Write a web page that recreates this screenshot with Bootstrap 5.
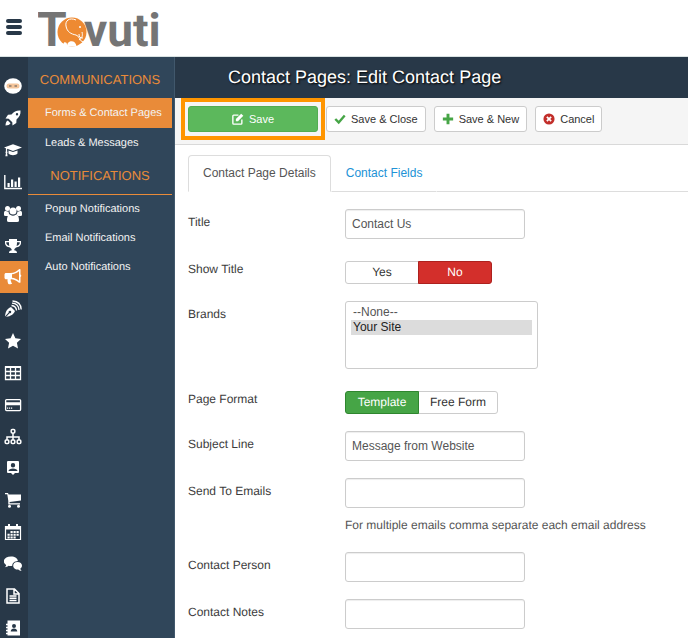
<!DOCTYPE html>
<html lang="en">
<head>
<meta charset="utf-8">
<meta name="viewport" content="width=device-width, initial-scale=1">
<title>Contact Pages: Edit Contact Page</title>
<link rel="stylesheet" href="https://cdn.jsdelivr.net/npm/bootstrap@5.3.0/dist/css/bootstrap.min.css">
<style>
:root{--rail:#283848;--side:#30465a;--accent:#e98b39}
body{font-family:"Liberation Sans",Arial,sans-serif;font-size:12px;line-height:20px;color:#3c3c3c;background:#fff;text-rendering:geometricPrecision}
.topbar{height:57px;border-bottom:1px solid #d9e2e2;padding-left:6px}
.menu-btn{line-height:0}
.scroll-pane{overflow-y:auto;scrollbar-width:none}
.scroll-pane::-webkit-scrollbar{display:none}
.rail{width:28px;background:var(--rail);padding-top:13px}
.rail a{display:flex;align-items:center;justify-content:center;height:32px;padding-right:2px;color:#fff}
.rail li:nth-child(6n) a{height:31px}
.rail a.active{background:var(--accent)}
.rail svg{width:18px;height:18px}
.sidemenu{width:147px;background:var(--side);border-right:1px solid #41586c;padding:0 2px 0 0}
.side-title{font-size:13px;line-height:20px;color:var(--accent);text-align:center;padding:13px 0 8px}
.side-title.ruled{padding:8px 0;border-bottom:1px solid var(--accent)}
.sidemenu a{display:block;font-size:11px;line-height:29px;padding-left:17px;color:#f3f3f3;text-decoration:none;white-space:nowrap}
.sidemenu a.active{background:var(--accent);padding-top:1px;margin-bottom:1px}
.page-title{background:var(--rail);color:#fff;font-size:18px;line-height:41px;padding-left:53px;text-shadow:1px 1px 2px #000}
.toolbar{background:#f5f5f5;border-bottom:1px solid #d9d9d9;padding:8px 13px 12px}
.tool{display:inline-flex;align-items:center;justify-content:center;height:26px;padding:0 7px;border:1px solid #ccc;border-radius:3px;background:#fff;font-size:11px;line-height:16px;color:#333;gap:5px;white-space:nowrap}
.tool svg{width:12px;height:12px}
.tool-save{background:#5cb85c;border-color:#52ad52;color:#fff;width:130px;position:relative}
.tool-save::after{content:"";position:absolute;inset:-9px -8px;border:4px solid #ff9500;z-index:1;pointer-events:none}
.edit-tabs{padding:10px 0 0 13px;border:0}
.edit-tabs .nav-link{border:1px solid transparent;border-bottom-color:#ddd;border-radius:4px 4px 0 0;margin:0;padding:7px 14px 8px;color:#2192d6;line-height:20px}
.edit-tabs .nav-link.active{border-color:#ddd #ddd #fff;color:#555}
.edit-tabs .tab-rest{border-bottom:1px solid #ddd}
.edit-form{padding:17px 13px 0}
.field{display:flex;margin-bottom:17px}
.field-name{width:157px;flex:none;padding-top:3px}
.text-field{width:180px;height:30px;padding:4px 6px;border:1px solid #ccc;border-radius:3px;font-size:12px;color:#555;box-shadow:inset 0 1px 1px #eee}
.list-field{display:block;width:193px;height:68px;padding:3px 5px;border:1px solid #ccc;border-radius:3px;font-size:12px;line-height:15px;color:#555;overflow:hidden}
.list-field option{line-height:15px;padding:0 2px;min-height:15px}
.list-field option:checked{background:#dcdcdc linear-gradient(#dcdcdc,#dcdcdc);color:#222}
.switch{padding-top:5px}
.switch .btn{height:23px;min-width:74px;padding:0 11px;border:1px solid #ccc;border-radius:3px;font-size:12px;line-height:21px;color:#333;background:#fff}
.switch .btn-check:checked+.pick-no{background:#d32f2b;border-color:#ad211e;color:#fff}
.switch .btn-check:checked+.pick-yes{background:#46a546;border-color:#2f862f;color:#fff}
.hint{padding-top:7px;color:#555}
</style>
<script src="https://cdn.jsdelivr.net/npm/bootstrap@5.3.0/dist/js/bootstrap.bundle.min.js"></script>
</head>
<body class="vh-100 d-flex flex-column overflow-hidden">
<header class="topbar d-flex align-items-center flex-shrink-0">
  <button class="menu-btn btn p-0 border-0" type="button" aria-label="Menu">
    <svg width="16" height="18" viewBox="0 0 16 18"><g fill="#283848"><rect width="16" height="4" rx="2"/><rect y="6" width="16" height="4" rx="2"/><rect y="12" width="16" height="4" rx="2"/></g></svg>
  </button>
  <a href="#" class="ms-3 lh-1" aria-label="Tovuti">
    <svg width="126" height="60" viewBox="0 -2 126 60">
      <g fill="#757575" font-family="Roboto, sans-serif" font-weight="700"><text x="-1" y="46" font-size="48">T</text><text x="46" y="46" font-size="46">vuti</text></g>
      <g transform="translate(0 7)">
      <circle cx="34" cy="25" r="14.500" fill="#ee8a32"/>
      <path d="M29 40v-2.500c0-2-1.800-2.800-3-2l-1 2.500 2 2zM29 39.500c0-7 9-7 9.500 0z" fill="#fff"/>
      <path d="M38 13c-7-3-11 1-10 6 1 6 5 8 10 9 4 1 3 6 7 7M44 25c1 4 0 6-3 8M41 27c0 3 1 4 4 4" fill="none" stroke="#fff" stroke-width="1"/>
      <circle cx="42" cy="20" r="1" fill="#fff"/>
      </g>
    </svg>
  </a>
</header>

<div class="d-flex flex-grow-1 overflow-hidden">
  <nav class="rail scroll-pane flex-shrink-0" aria-label="Sections">
    <ul class="list-unstyled mb-0">
      <li><a href="#" aria-label="Ninja"><svg viewBox="0 0 18 18"><ellipse cx="9" cy="9" rx="8.800" ry="7.800" fill="#fff"/><rect x="2.500" y="6.500" width="13" height="5" rx="2.500" fill="#f4c59b"/><path d="M5 9h2.500M10.500 9H13" stroke="#555" stroke-width="1.200"/></svg></a></li>
      <li><a href="#" aria-label="Launch"><svg viewBox="0 0 18 18" fill="currentColor"><path fill-rule="evenodd" d="M16.500 1.500c-4-.3-6.500 1-9 4L4 5.700 1.500 9.500l3.200.2 3.600 3.600.2 3.200 3.800-2.500.2-3.500c3-2.500 4.300-5 4-9zM13 4a1.200 1.200 0 1 1 0 2.400A1.200 1.200 0 0 1 13 4zM3.800 11.500C2 12.500 1.700 14 1.500 16.500c2.500-.2 4-.5 5-2.300z"/></svg></a></li>
      <li><a href="#" aria-label="Courses"><svg viewBox="0 0 20 18"><path fill="#fff" d="M10 2.500 20 6.200 10 10 3.500 7.600v3.200c.8.500.5 1.300 0 1.700l.5 3.500H1.500l.6-3.500c-.5-.5-.7-1.200 0-1.700V7L0 6.200zM5 9.500l5 1.800 5-1.800v3.500c-2 2.300-8 2.300-10 0z"/></svg></a></li>
      <li><a href="#" aria-label="Reports"><svg viewBox="0 0 18 18"><path d="M.8 2v13.500H18" fill="none" stroke="#fff" stroke-width="1.400"/><path d="M3.500 10h2.200v4H3.500zM7 6.500h2.200V14H7zM10.500 8.500h2.200V14h-2.200zM14 4.500h2.200V14H14z" fill="#fff"/></svg></a></li>
      <li><a href="#" aria-label="Users"><svg viewBox="0 0 18 18" fill="currentColor"><circle cx="3.500" cy="3.500" r="2.500"/><circle cx="14.500" cy="3.500" r="2.500"/><circle cx="9" cy="6" r="3.500"/><path d="M0 10V8c0-2 1.500-2.500 3-1.500h1.500C4.700 8 5 9 5.800 9.500L4 11H1.500Q0 11 0 10zM18 10V8c0-2-1.500-2.500-3-1.500h-1.500c-.2 1.500-.5 2.500-1.300 3L14 11h2.500q1.500 0 1.500-1zM3 15.500C3 12 4 9.500 6.300 9.800c1.700 1.300 3.700 1.300 5.400 0C14 9.500 15 12 15 15.500q0 1.500-2 1.500H5q-2 0-2-1.500z"/></svg></a></li>
      <li><a href="#" aria-label="Achievements"><svg viewBox="0 0 18 18"><path fill="#fff" fill-rule="evenodd" d="M5 2h8v2h4v2c0 2.800-2.500 4.300-5 4.500-1 1-1.800 1.500-1.800 2.700 1.500 0 2.800.8 2.800 2.800H5c0-2 1.300-2.800 2.800-2.800 0-1.200-.8-1.700-1.800-2.700C3.500 10.300 1 8.800 1 6V4h4zM2.300 5.300V6c0 1.400 1.300 2.500 3 3C4.900 7.800 5 6.500 5 5.300zm13.400 0H13c0 1.200 0 2.500-.4 3.700 1.700-.5 3.100-1.600 3.100-3z"/></svg></a></li>
      <li><a href="#" class="active" aria-label="Communications"><svg viewBox="0 0 18 18"><path fill="#fff" fill-rule="evenodd" d="M16.500 1.500v5c1 .5 1 2 0 2.500v5c0 1-1 1-1.500.7C12.300 12.500 10 11.300 7 11.200c-.7.700-.3 1.500.2 2-.4.800 0 1.300 1 2-.8 1.300-3 1.400-4 .6-.4-1.500-1-3-.6-4.600H2c-.8 0-1.500-.6-1.500-1.500V6.500C.5 5.600 1.200 5 2 5h4.500c3.500 0 6-1.700 8.500-3.800.7-.5 1.500-.4 1.500.3zM15 3.200C12.700 5 10.500 6 8 6.300v3.500c2.500.3 4.700 1.200 7 3z"/></svg></a></li>
      <li><a href="#" aria-label="Blog"><svg viewBox="0 0 18 18"><path fill="#fff" fill-rule="evenodd" d="M1 16.500C1.500 12 2.500 9 7 7l4 4c-1.500 3.500-4 5-9 6l3.500-3.800a1.300 1.300 0 1 0-.8-.8z"/><path d="M7.500 5.500c3 .3 4.800 2 5 5M8 3.200c4.500.2 6.700 2.700 7 6.800M8.500 1c5.500.3 8.500 3.500 8.700 8.500" fill="none" stroke="#fff" stroke-width="1.300"/></svg></a></li>
      <li><a href="#" aria-label="Favorites"><svg viewBox="0 0 18 18"><path fill="#fff" d="m9 1 2.400 5.200 5.600.7-4.100 3.900 1.100 5.700L9 13.700l-5 2.800 1.100-5.700L1 6.900l5.600-.7z"/></svg></a></li>
      <li><a href="#" aria-label="Tables"><svg viewBox="0 0 18 18"><path fill="none" stroke="#fff" stroke-width="1.300" d="M1.500 3h15v12.500h-15zM1.500 7.500h15M1.500 11.500h15M6.500 3v12.500M11.500 3v12.500"/><path fill="#fff" d="M1 2h16v2H1z"/></svg></a></li>
      <li><a href="#" aria-label="Payments"><svg viewBox="0 0 18 18"><rect x="1.600" y="3.600" width="15" height="11" rx="1" fill="none" stroke="#fff" stroke-width="1.300"/><path fill="#fff" d="M1.500 6.300h15v3h-15zM3 11.500h1.200v1.200H3zM5 11.500h1.200v1.200H5zM7 11.500h1.200v1.200H7z"/></svg></a></li>
      <li><a href="#" aria-label="Structure"><svg viewBox="0 0 18 18"><g fill="none" stroke="#fff" stroke-width="1.500"><rect x="7.200" y="1.500" width="3.600" height="3.600" rx="1"/><rect x="1.200" y="12" width="3.600" height="3.600" rx="1"/><rect x="7.200" y="12" width="3.600" height="3.600" rx="1"/><rect x="13.200" y="12" width="3.600" height="3.600" rx="1"/><path d="M9 5v7M3 12V9h12v3"/></g></svg></a></li>
      <li><a href="#" aria-label="Locations"><svg viewBox="0 0 18 18"><path fill="#fff" fill-rule="evenodd" d="M4 2h10q1 0 1 1v10q0 1-1 1h-3l-2 2-2-2H4q-1 0-1-1V3q0-1 1-1zm5 2a2.200 2.200 0 1 0 0 4.400A2.200 2.200 0 0 0 9 4zm-4.500 8h9c0-3.500-9-3.500-9 0z"/></svg></a></li>
      <li><a href="#" aria-label="Store"><svg viewBox="0 0 18 18"><path fill="#fff" d="M1 2h3l.6 1.500H17V9.500L5.600 11v1.300H16v1.200H4.300V10L3.300 3.200H1z"/><circle cx="5.500" cy="15.200" r="1.500" fill="#fff"/><circle cx="14.500" cy="15.200" r="1.500" fill="#fff"/></svg></a></li>
      <li><a href="#" aria-label="Calendar"><svg viewBox="0 0 18 18"><path fill="none" stroke="#fff" stroke-width="1.200" d="M1.500 3.500h15v13h-15z"/><path fill="#fff" d="M1.500 3h15v3.500h-15zM4 1h2v3H4zM12 1h2v3h-2z"/><path d="M6.500 9h8.500M3.500 11.700H15M3.500 14.400h8.500" stroke="#fff" stroke-width="2" stroke-dasharray="2.200 .8"/></svg></a></li>
      <li><a href="#" aria-label="Comments"><svg viewBox="0 0 18 18" fill="currentColor"><path d="M7 1.500c4 0 6.800 2 6.800 4.500-3.300.2-5.500 2-5.500 4.700-1.500.4-2.800.2-3.800 0-1.200 1-2.300 1.400-3.700 1.500.8-.7 1.300-1.300 1.300-2.300C-2.500 7 0 1.500 7 1.500z"/><path d="M13.300 7c3 0 4.700 1.700 4.700 3.800 0 1.200-.6 2.100-1.600 2.800 0 1 .5 1.600 1.200 2.400-1.300 0-2.500-.5-3.400-1.400-3.200.2-5-1.600-5-3.800S10.600 7 13.300 7z"/></svg></a></li>
      <li><a href="#" aria-label="Documents"><svg viewBox="0 0 18 18"><path fill="none" stroke="#fff" stroke-width="1.500" d="M3 2h7.500L15 6.500V16H3zM10 2v5h5M5.500 9h7M5.500 11.300h7M5.500 13.600h7"/></svg></a></li>
      <li><a href="#" aria-label="Contacts"><svg viewBox="0 0 18 18"><path fill="#fff" fill-rule="evenodd" d="M3.500 1.500H16v15H3.500v-1.300H2v-1.500h1.500v-1.500H2v-1.500h1.500V9.200H2V7.700h1.500V6.200H2V4.700h1.500zM10 5a2 2 0 1 0 0 4 2 2 0 0 0 0-4zm-3.300 7.500h6.600c0-4-6.600-4-6.600 0z"/></svg></a></li>
    </ul>
  </nav>

  <nav class="sidemenu scroll-pane flex-shrink-0" aria-label="Communications">
    <h2 class="side-title mb-0">COMMUNICATIONS</h2>
    <a href="#" class="active">Forms &amp; Contact Pages</a>
    <a href="#">Leads &amp; Messages</a>
    <h2 class="side-title ruled mb-0">NOTIFICATIONS</h2>
    <a href="#">Popup Notifications</a>
    <a href="#">Email Notifications</a>
    <a href="#">Auto Notifications</a>
  </nav>

  <main class="scroll-pane flex-grow-1">
    <h1 class="page-title mb-0">Contact Pages: Edit Contact Page</h1>
    <div class="toolbar d-flex gap-2">
      <button type="button" class="tool tool-save"><svg viewBox="0 0 14 14"><path d="M11.500 7.500V12q0 1-1 1H2q-1 0-1-1V3.500q0-1 1-1h5.500" fill="none" stroke="#fff" stroke-width="1.600"/><path d="M4.500 7 10.700.8l2.500 2.500L7 9.500H4.500z" fill="#fff"/></svg>Save</button>
      <button type="button" class="tool"><svg viewBox="0 0 14 14"><path d="m1.500 7 4 4 7-8" fill="none" stroke="#46a546" stroke-width="2.800"/></svg>Save &amp; Close</button>
      <button type="button" class="tool"><svg viewBox="0 0 14 14"><path d="M7 1v12M1 7h12" stroke="#46a546" stroke-width="3.400"/></svg>Save &amp; New</button>
      <button type="button" class="tool"><svg viewBox="0 0 14 14"><circle cx="7" cy="7" r="6.500" fill="#c22e2a"/><path d="m4.500 4.500 5 5m0-5-5 5" stroke="#fff" stroke-width="2"/></svg>Cancel</button>
    </div>
    <ul class="nav nav-tabs edit-tabs flex-nowrap" role="tablist">
      <li class="nav-item"><button type="button" role="tab" aria-selected="true" class="nav-link active">Contact Page Details</button></li>
      <li class="nav-item"><button type="button" role="tab" aria-selected="false" class="nav-link">Contact Fields</button></li>
      <li class="tab-rest flex-grow-1" role="presentation"></li>
    </ul>
    <form class="edit-form">
      <div class="field"><label class="field-name" for="title">Title</label><input class="text-field" id="title" type="text" value="Contact Us"></div>
      <div class="field" role="group" aria-labelledby="show-name"><span class="field-name" id="show-name">Show Title</span>
        <div class="switch"><div class="btn-group d-flex">
          <input class="btn-check" type="radio" name="show" id="show-yes"><label class="btn pick-yes" for="show-yes">Yes</label>
          <input class="btn-check" type="radio" name="show" id="show-no" checked><label class="btn pick-no" for="show-no">No</label>
        </div></div></div>
      <div class="field"><label class="field-name" for="brands">Brands</label><select class="list-field" id="brands" multiple size="4"><option>--None--</option><option selected>Your Site</option></select></div>
      <div class="field" role="group" aria-labelledby="format-name"><span class="field-name" id="format-name">Page Format</span>
        <div class="switch"><div class="btn-group d-flex">
          <input class="btn-check" type="radio" name="format" id="format-template" checked><label class="btn pick-yes" for="format-template">Template</label>
          <input class="btn-check" type="radio" name="format" id="format-free"><label class="btn pick-yes" for="format-free">Free Form</label>
        </div></div></div>
      <div class="field"><label class="field-name" for="subject">Subject Line</label><input class="text-field" id="subject" type="text" value="Message from Website"></div>
      <div class="field"><label class="field-name" for="emails">Send To Emails</label><div><input class="text-field d-block" id="emails" type="text" aria-describedby="emails-hint"><div class="hint" id="emails-hint">For multiple emails comma separate each email address</div></div></div>
      <div class="field"><label class="field-name" for="person">Contact Person</label><input class="text-field" id="person" type="text"></div>
      <div class="field"><label class="field-name" for="notes">Contact Notes</label><input class="text-field" id="notes" type="text"></div>
    </form>
  </main>
</div>
</body>
</html>
